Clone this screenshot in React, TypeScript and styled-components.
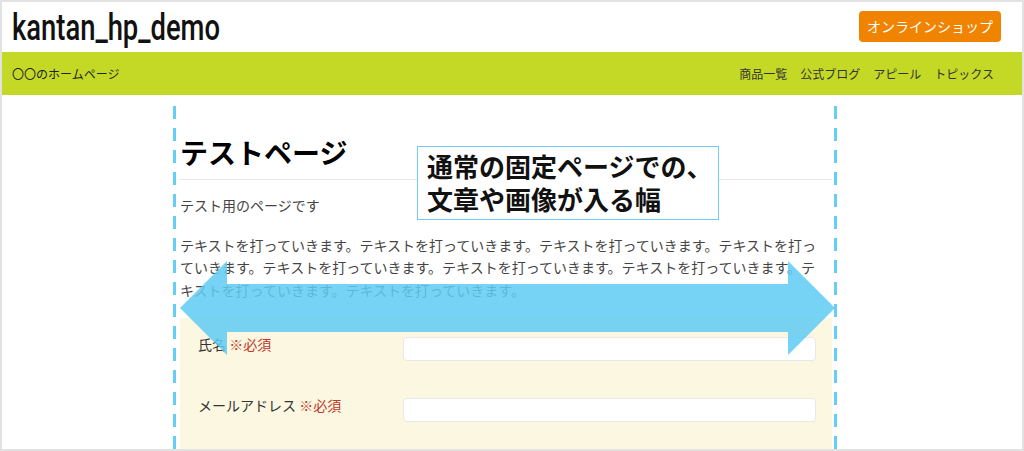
import React from 'react'
import styled, { createGlobalStyle } from 'styled-components'

const GlobalStyle = createGlobalStyle`
  html, body {
    margin: 0;
    padding: 0;
    background: #fff;
  }
  body {
    font-family: 'Noto Sans CJK JP', 'Noto Sans', sans-serif;
    color: #333;
  }
  * {
    box-sizing: border-box;
  }
`

const Frame = styled.div`
  position: relative;
  width: 1024px;
  height: 451px;
  overflow: hidden;
  background: #fff;

  &::after {
    content: '';
    position: absolute;
    inset: 0;
    border: 2px solid #e2e2e2;
    pointer-events: none;
  }
`

const Header = styled.header`
  display: flex;
  align-items: center;
  justify-content: space-between;
  height: 52px;
  padding: 0 23px 0 12px;
`

const SiteTitle = styled.h1`
  margin: 3px 0 0;
  font-family: Roboto, 'Liberation Sans', sans-serif;
  font-size: 37px;
  font-weight: 500;
  line-height: 37px;
  color: #111;
  transform: scaleX(0.74);
  transform-origin: left center;
`

const ShopButton = styled.a`
  display: inline-block;
  height: 31px;
  padding: 0 8px;
  line-height: 31px;
  border-radius: 4px;
  background: #f08300;
  color: #fff;
  font-size: 14px;
  text-decoration: none;
`

const NavBar = styled.nav`
  display: flex;
  align-items: center;
  justify-content: space-between;
  height: 43px;
  padding: 0 30px 0 12px;
  background: #c4d926;
  font-size: 12px;
  color: #222;
`

const NavLinks = styled.div`
  display: flex;
  gap: 13px;
`

const NavLink = styled.span`
  color: #333;
`

const Main = styled.main`
  width: 652px;
  margin-left: 180px;
  padding-top: 40px;
`

const PageTitle = styled.h2`
  margin: 0;
  padding-bottom: 10px;
  border-bottom: 1px solid #e6e6e6;
  font-size: 28px;
  font-weight: 700;
  line-height: 34px;
  color: #000;
`

const Lead = styled.p`
  margin: 14px 0 0;
  font-size: 14px;
  line-height: 22px;
  color: #444;
`

const BodyText = styled.p`
  margin: 18px 0 0;
  width: 642px;
  font-size: 14px;
  line-height: 22.4px;
  color: #444;
`

const FormBox = styled.div`
  display: flex;
  flex-direction: column;
  gap: 37px;
  margin-top: 17px;
  padding: 19px 16px 30px 18px;
  background: #fcf7e1;
`

const FormRow = styled.div`
  display: flex;
  align-items: flex-start;
`

const FieldLabel = styled.label`
  width: 205px;
  margin-top: -2px;
  font-size: 14px;
  line-height: 18px;
  color: #333;
`

const Required = styled.span`
  color: #c0392b;
`

const TextInput = styled.input`
  flex: 1;
  height: 24px;
  border: 1px solid #e8e8e8;
  border-radius: 4px;
  background: #fff;
  outline: none;
`

const GuideLine = styled.div<{ $left: number }>`
  position: absolute;
  top: 106px;
  bottom: 0;
  left: ${({ $left }) => $left}px;
  width: 3px;
  background: repeating-linear-gradient(to bottom, #66cdf6 0 13px, transparent 13px 22px);
`

const ArrowLayer = styled.svg`
  position: absolute;
  left: 0;
  top: 0;
  pointer-events: none;
`

const Callout = styled.div`
  position: absolute;
  left: 417px;
  top: 146px;
  width: 302px;
  height: 74px;
  padding: 2px 0 0 9px;
  border: 1px solid #6dcdf5;
  background: #fff;
  font-size: 26px;
  font-weight: 700;
  line-height: 33px;
  color: #111;
  white-space: nowrap;
`

const App = () => {
  const fields = ['氏名', 'メールアドレス']

  return (
    <Frame>
      <GlobalStyle />
      <Header>
        <SiteTitle>kantan_hp_demo</SiteTitle>
        <ShopButton href="#">オンラインショップ</ShopButton>
      </Header>
      <NavBar>
        <span>〇〇のホームページ</span>
        <NavLinks>
          {['商品一覧', '公式ブログ', 'アピール', 'トピックス'].map((item) => (
            <NavLink key={item}>{item}</NavLink>
          ))}
        </NavLinks>
      </NavBar>
      <Main>
        <PageTitle>テストページ</PageTitle>
        <Lead>テスト用のページです</Lead>
        <BodyText>{'テキストを打っていきます。'.repeat(9)}</BodyText>
        <FormBox>
          {fields.map((label) => (
            <FormRow key={label}>
              <FieldLabel>
                {label} <Required>※必須</Required>
              </FieldLabel>
              <TextInput type="text" />
            </FormRow>
          ))}
        </FormBox>
      </Main>

      <GuideLine $left={173} />
      <GuideLine $left={834} />
      <ArrowLayer width="1024" height="451" viewBox="0 0 1024 451">
        <polygon
          points="180,308 227,261 227,284 788,284 788,261 835,308 788,355 788,332 227,332 227,355"
          fill="#5fcbf3"
          fillOpacity="0.85"
        />
      </ArrowLayer>
      <Callout>
        通常の固定ページでの、
        <br />
        文章や画像が入る幅
      </Callout>
    </Frame>
  )
}

export default App
